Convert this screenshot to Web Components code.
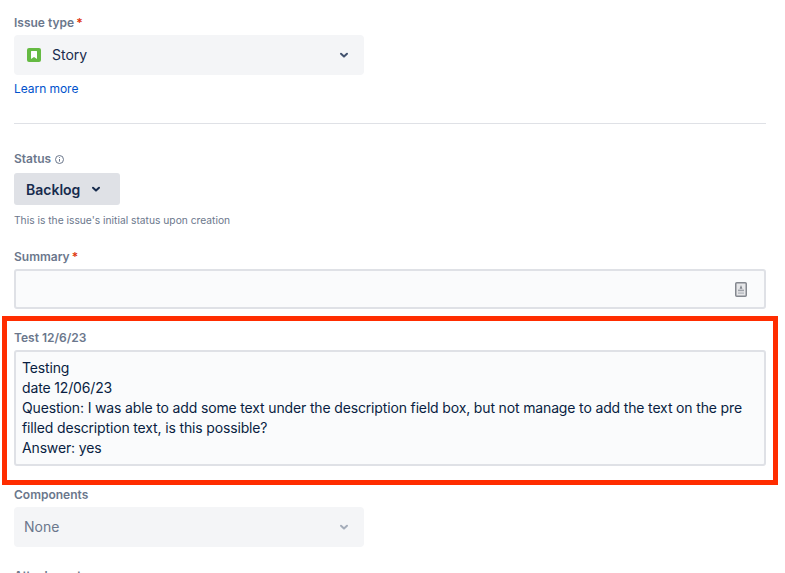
<!DOCTYPE html>
<html lang="en">
<head>
<meta charset="utf-8">
<title>Create issue</title>
<style>
  html, body { margin: 0; height: 100%; overflow: hidden; background: #fff; }
  body { font-family: 'Inter', 'Liberation Sans', sans-serif; color: #172b4d; }
</style>
</head>
<body>
<issue-form>
  <form-field label="Issue type" required>
    <select-box value="Story" wide><story-icon slot="icon"></story-icon></select-box>
    <a-link>Learn more</a-link>
  </form-field>
  <hr-line></hr-line>
  <form-field label="Status" info gap="6">
    <status-button>Backlog</status-button>
    <help-text>This is the issue's initial status upon creation</help-text>
  </form-field>
  <form-field label="Summary" required style="margin-top:4px"><text-input></text-input></form-field>
  <red-highlight>
    <form-field label="Test 12/6/23">
      <text-area>Testing
date 12/06/23
Question: I was able to add some text under the description field box, but not manage to add the text on the pre filled description text, is this possible?
Answer: yes</text-area>
    </form-field>
  </red-highlight>
  <form-field label="Components"><select-box value="None" muted></select-box></form-field>
  <form-field label="Attachment" style="margin-top:3px"></form-field>
</issue-form>

<script>
const CHEVRON = `<svg width="16" height="16" viewBox="0 0 16 16" fill="none"><path d="M5 6.8 8 9.6l3-2.8" stroke="currentColor" stroke-width="2" stroke-linecap="round" stroke-linejoin="round"/></svg>`;

function define(name, css, html, setup) {
  customElements.define(name, class extends HTMLElement {
    connectedCallback() {
      if (this.shadowRoot) return;
      this.attachShadow({ mode: 'open' });
      this.shadowRoot.innerHTML = `<style>${css}</style>` + (typeof html === 'function' ? html(this) : html);
      if (setup) setup(this);
    }
  });
}

define('issue-form', `
  :host { display: flex; flex-direction: column; gap: 18px; width: 752px; padding: 15px 0 0 14px; }
`, `<slot></slot>`);

define('form-field', `
  :host { display: block; }
  .label { display: flex; align-items: center; height: 16px; font-size: 12px; line-height: 16px; font-weight: 600; color: #6b778c; }
  .req { color: #de350b; margin-left: 2px; }
  svg { margin-left: 3px; color: #6b778c; }
  .body { display: block; }
`, el => `
  <div class="label" style="margin-bottom:${el.getAttribute('gap') || 4}px">
    ${el.getAttribute('label')}
    ${el.hasAttribute('required') ? '<span class="req">*</span>' : ''}
    ${el.hasAttribute('info') ? `<svg width="11" height="11" viewBox="0 0 11 11" fill="none"><circle cx="5.5" cy="5.5" r="4" stroke="currentColor"/><path d="M5.5 5v2.6M5.5 3.2v.8" stroke="currentColor"/></svg>` : ''}
  </div>
  <div class="body"><slot></slot></div>`);

define('select-box', `
  :host { display: flex; align-items: center; width: 350px; height: 40px; box-sizing: border-box; padding: 0 12px 0 13px;
    background: #f4f5f7; border-radius: 4px; font-size: 14px; color: #172b4d; }
  :host([muted]) { color: #6b778c; padding-left: 10px; }
  .value { flex: 1; padding-bottom: 2px; }
  ::slotted(*) { margin-right: 11px; }
  svg { display: block; color: #42526e; }
  :host([muted]) svg { color: #a5adba; }
`, el => `<slot name="icon"></slot><span class="value">${el.getAttribute('value')}</span>${CHEVRON}`);

define('story-icon', `
  :host { display: block; width: 14px; height: 14px; }
  svg { display: block; }
`, `<svg width="14" height="14" viewBox="0 0 14 14"><rect width="14" height="14" rx="2" fill="#65ba43"/><path d="M4 3.5a.5.5 0 0 1 .5-.5h5a.5.5 0 0 1 .5.5V11L7 9 4 11z" fill="#fff"/></svg>`);

define('a-link', `
  :host { display: block; margin-top: 6px; font-size: 12px; line-height: 16px; letter-spacing: -0.05px; color: #0052cc; }
`, `<slot></slot>`);

define('hr-line', `
  :host { display: block; height: 1px; background: #dfe1e6; margin: 8px 0 9px; }
`, ``);

define('status-button', `
  :host { display: flex; align-items: center; gap: 8px; width: 106px; height: 32px; box-sizing: border-box; padding: 0 12px;
    background: #dfe1e6; border-radius: 3px; font-size: 14px; font-weight: 600; color: #172b4d; }
  svg { display: block; }
`, `<slot></slot>${CHEVRON}`);

define('help-text', `
  :host { display: block; margin-top: 8px; font-size: 10.25px; line-height: 14px; color: #6b778c; }
`, `<slot></slot>`);

define('text-input', `
  :host { display: flex; align-items: center; justify-content: flex-end; height: 40px; box-sizing: border-box; padding: 0 17px;
    background: #fafbfc; border: 2px solid #dfe1e6; border-radius: 3px; }
  svg { display: block; }
`, `<svg width="12" height="15" viewBox="0 0 12 15"><rect x=".75" y=".75" width="10.5" height="13.5" rx="1" fill="#e6e7e9" stroke="#84888f" stroke-width="1.5"/><path d="M6 3 7.4 6.8H4.6z" fill="#7f838b"/><rect x="3" y="7.6" width="6" height="1.6" fill="#9ea2a9"/><rect x="3" y="10.4" width="6" height="1.4" fill="#b7bac0"/></svg>`);

define('text-area', `
  :host { display: block; box-sizing: border-box; padding: 6px 6px; background: #fafbfc; border: 2px solid #dfe1e6; border-radius: 3px;
    font-size: 14px; line-height: 20px; letter-spacing: -0.15px; color: #091e42; white-space: pre-wrap; }
`, `<slot></slot>`);

// annotation drawn round the field in the screenshot
define('red-highlight', `
  :host { display: block; margin: -11px -12px -16px; padding: 9px 7px 14px; border: 5px solid #ff2d00; }
`, `<slot></slot>`);
</script>
</body>
</html>
